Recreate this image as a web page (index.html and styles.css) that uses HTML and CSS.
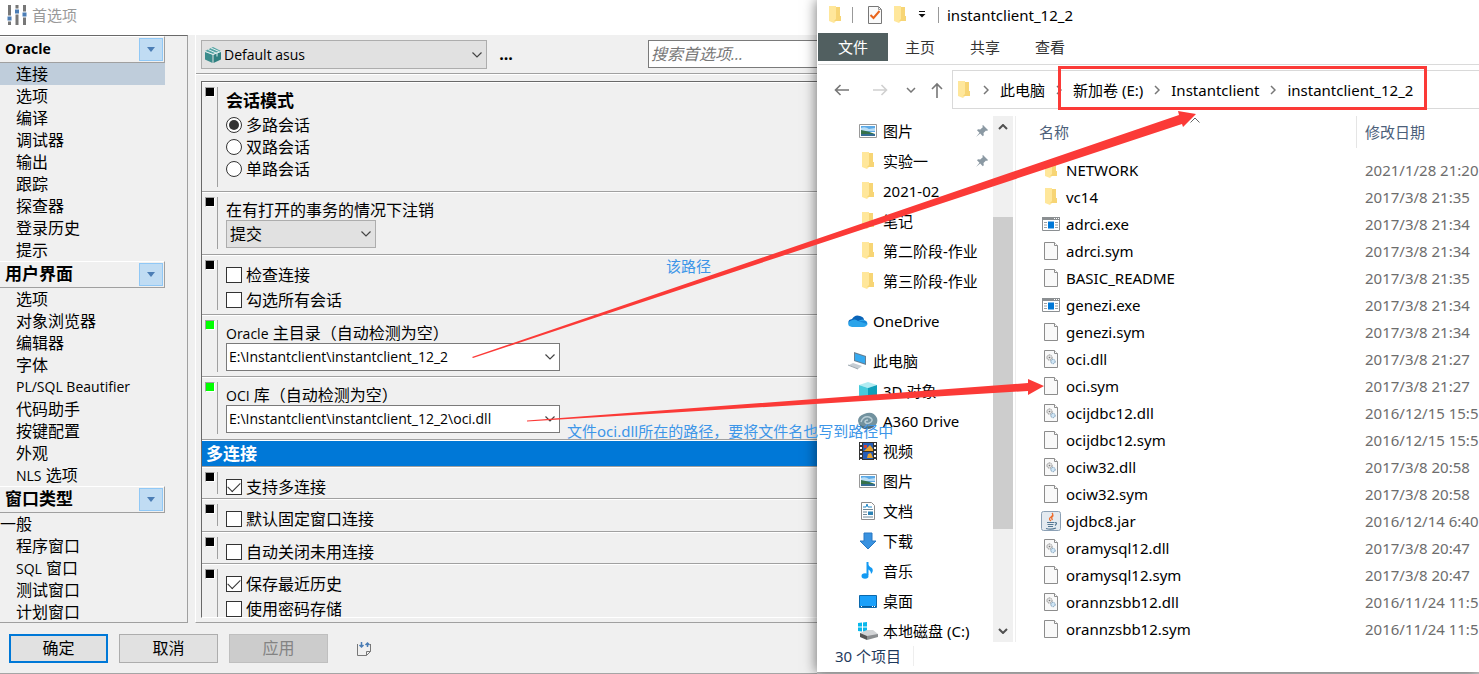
FILE: index.html
```html
<!DOCTYPE html>
<html lang="zh-CN">
<head>
<meta charset="utf-8">
<title>首选项</title>
<link rel="stylesheet" href="styles.css">
</head>
<body>
<svg class="defs" aria-hidden="true">
  <symbol id="chev-down" viewBox="0 0 10 6"><path d="M.5.5 5 5 9.500.5" fill="none" stroke="#444" stroke-width="1.2"/></symbol>
  <symbol id="folder" viewBox="0 0 20 20"><path d="M7 2h7v14H7z" fill="#f5cf68"/><path d="M4 1h7v15l-2 2-5-2z" fill="#ffe79b"/><path d="M11 2h4v9h1v5H9l2-2z" fill="#f7d575"/></symbol>
  <symbol id="file" viewBox="0 0 20 20"><path d="M3.500 1.500h10l3 3v14h-13z" fill="#f9f9f9" stroke="#8c8c8c"/><path d="M13.500 1.500v3h3" fill="#fff" stroke="#8c8c8c"/></symbol>
  <symbol id="dll" viewBox="0 0 20 20"><path d="M3.500 1.500h10l3 3v14h-13z" fill="#f9f9f9" stroke="#8c8c8c"/><path d="M13.500 1.500v3h3" fill="#fff" stroke="#8c8c8c"/><circle cx="8.500" cy="8.500" r="2.600" fill="#e4e4e4" stroke="#888" stroke-dasharray="1.500 .7"/><circle cx="8.500" cy="8.500" r=".8" fill="#777"/><circle cx="12" cy="12.500" r="2.200" fill="#cfe5f5" stroke="#7899b4" stroke-dasharray="1.400 .6"/></symbol>
  <symbol id="exe" viewBox="0 0 20 20"><path d="M1.500 3.500h17v13h-17z" fill="#fff" stroke="#8b8f92"/><path d="M1 3h18v3H1z" fill="#8b8f92"/><path d="M13 4.500h1m1 0h1m1 0h1" stroke="#fff"/><path d="M7 7.500h6v7H7z" fill="#0078d7"/><path d="M3 8.500h3M3 11h3M3 13.500h3M14 8.500h3M14 11h3M14 13.500h3" stroke="#9aa0a4"/></symbol>
  <symbol id="jar" viewBox="0 0 20 20"><rect x=".5" y=".5" width="19" height="19" rx="2" fill="#e4eaf0" stroke="#8ba0b5"/><path d="M11 2q2 2-1 4t0 4M12.500 4.500q-3 2-1 4.500" fill="none" stroke="#ed6b2b" stroke-width="1.300"/><path d="M6 11.500h7.500M6.500 13.500h6M7 15.500h5M5 17.500q5 1.500 10-.5M14 11.500q3 0 0 3" fill="none" stroke="#557894" stroke-width="1.200"/></symbol>
  <symbol id="picture" viewBox="0 0 20 20"><path d="M1.500 3.500h17v13h-17z" fill="#fff" stroke="#999"/><path d="M3 5h14v6H3z" fill="#5ba9e6"/><path d="M3 7q4-2 8 1l6-1v3H3z" fill="#b9ddf6"/><path d="M3 9q7 1 14 4v2H3z" fill="#35714a"/><path d="M3 13h14v2H3z" fill="#356d94"/></symbol>
  <symbol id="pin" viewBox="0 0 14 14"><path d="M8 1l5 5-1 1-1-.5L8.500 9l.3 2.200-1 1L5.200 9.600 1 13l3.500-4.200L2 6.200l1-1 2.200.3L8 3l-.8-1z" fill="#8b99a3"/></symbol>
  <symbol id="onedrive" viewBox="0 0 20 20"><path d="M4 8q3-5 8-3 4 1 4 4l-6 3-8 3Q-2 9 4 8z" fill="#0a64b8"/><path d="M1 15q-2-3 1-5 5-3 8 0 5-3 8 0 3 3 0 5-1 1-3 1H4z" fill="#2ba4ea"/><path d="M10 10l8 0q1 1 1 3z" fill="#1585d6"/></symbol>
  <symbol id="pc" viewBox="0 0 20 20"><path d="M6 1l12 4v9L6 10z" fill="#667f92"/><path d="M7 2.500l10 3.300v6.700L7 9.200z" fill="#35aaf0"/><path d="M1 14l4-2 9 3-4 3z" fill="#c6cdd3"/><path d="M0 14l10 4" stroke="#9aa5ad"/></symbol>
  <symbol id="cube" viewBox="0 0 20 20"><path d="M1 4l9-3 9 3-9 3z" fill="#b0ecf2"/><path d="M1 4l9 3v12l-9-3z" fill="#47cbdc"/><path d="M19 4l-9 3v12l9-3z" fill="#0e9fba"/></symbol>
  <symbol id="a360" viewBox="0 0 20 20"><path d="M0 10q0-5 6-7 9-4 13 4 2 8-7 10l-3-1q-8 1-9-6z" fill="#72929f"/><path d="M3 11q2-6 8-5 5 2 2 5-4 3-6 0 0-2 3-2" fill="none" stroke="#b9ced6" stroke-width="1.500"/><path d="M1 13q6 5 14 1l1 2q-7 4-12 1z" fill="#4c6d7c"/></symbol>
  <symbol id="video" viewBox="0 0 20 20"><path d="M1 1h18v18H1z" fill="#333"/><path d="M5 2h10v8H5zM5 11h10v7H5z" fill="#245db8"/><path d="M6 4h3v3H6z" fill="#cf4334"/><path d="M8 8l4-4 3 4v2H6zM10 13l3-1 2 5h-6z" fill="#e7a22d"/><path d="M3 2v17M17 2v17" stroke="#fff" stroke-width="2" stroke-dasharray="2 2"/></symbol>
  <symbol id="doc" viewBox="0 0 20 20"><path d="M3.500 1.500h10l3 3v14h-13z" fill="#fff" stroke="#8c8c8c"/><path d="M5 6h3l1-3 1 3h4" fill="none" stroke="#278ac8"/><path d="M5 8.500h10M5 11h4M5 13.500h4M5 16h10" stroke="#6d8798"/><path d="M10 10.500h5v3.500h-5z" fill="#2d83b5"/></symbol>
  <symbol id="down" viewBox="0 0 20 20"><path d="M6 2h8v8h4l-8 8-8-8h4z" fill="#3992e0" stroke="#2879c4"/></symbol>
  <symbol id="music" viewBox="0 0 20 20"><path d="M9.500 1v13" stroke="#149af2" stroke-width="2"/><ellipse cx="7" cy="15" rx="3.500" ry="2.800" fill="#149af2"/><path d="M9 1q1 4 5 6 2 3-1 6 0-4-4-5z" fill="#149af2"/></symbol>
  <symbol id="desk" viewBox="0 0 20 20"><path d="M1.500 4.500h17v12h-17z" fill="#1aa0fa" stroke="#0b69ad"/><path d="M2 15.500h16" stroke="#075a9a"/><path d="M3 15.500h1m10 0h1m1 0h1" stroke="#fff"/></symbol>
  <symbol id="drive" viewBox="0 0 20 20"><path d="M0 2l4-.5v4H0zM5 1.400 9 1v4.500H5zM0 6.500h4v4L0 10zM5 6.500h4V11l-4-.4z" fill="#08b8ec"/><path d="M2 12l7-3h6l5 4v2l-11 2-7-3z" fill="#d2d4d6"/><path d="M2 12l7 3v4l-7-3z" fill="#555"/><path d="M9 15l11-2v3L9 19z" fill="#8a8d8f"/></symbol>
  <symbol id="crumb" viewBox="0 0 6 10"><path d="M1 1l4 4-4 4" fill="none" stroke="#777" stroke-width="1.500"/></symbol>
</svg>

<div class="desktop">
  <section class="prefs" aria-label="首选项">
    <header class="prefs-title">
      <svg width="20" height="20" viewBox="0 0 20 20"><path d="M2.500 0v20M10 0v20M17.500 0v20" stroke="#777" stroke-width="3"/><path d="M0 11h5v5H0zM7.500 4h5v5h-5zM15 7h5v5h-5z" fill="#4b7db5" stroke="#fff"/></svg>
      <span>首选项</span>
    </header>

    <div class="prefs-body">
      <nav class="side">
        <h2 class="side-head"><span class="latin">Oracle</span><button type="button" aria-label="折叠 Oracle"><i></i></button></h2>
        <ul>
          <li class="on">连接</li><li>选项</li><li>编译</li><li>调试器</li><li>输出</li><li>跟踪</li><li>探查器</li><li>登录历史</li><li>提示</li>
        </ul>
        <h2 class="side-head"><span>用户界面</span><button type="button" aria-label="折叠 用户界面"><i></i></button></h2>
        <ul>
          <li>选项</li><li>对象浏览器</li><li>编辑器</li><li>字体</li><li class="latin">PL/SQL Beautifier</li><li>代码助手</li><li>按键配置</li><li>外观</li><li><span class="latin">NLS</span> 选项</li>
        </ul>
        <h2 class="side-head"><span>窗口类型</span><button type="button" aria-label="折叠 窗口类型"><i></i></button></h2>
        <ul>
          <li class="outdent">一般</li><li>程序窗口</li><li><span class="latin">SQL</span> 窗口</li><li>测试窗口</li><li>计划窗口</li>
        </ul>
      </nav>

      <div class="main">
        <div class="tools">
          <div class="combo combo-profile">
            <svg class="box-icon" width="16" height="16" viewBox="0 0 16 16"><path d="M0 4l8-4 8 4-8 3z" fill="#53a3a3"/><path d="M0 4.500l7.500 3V16L0 12.500z" fill="#3b8c8c"/><path d="M16 4.500l-7.500 3V16l7.500-3.500z" fill="#2f8080"/><path d="M3 2.500l8 3.500M6 1l8 3.500M12 5.500v4M0 4.500l8 3 8-3" fill="none" stroke="#e1efef"/></svg>
            <select aria-label="配置"><option>Default asus</option></select>
            <svg class="chev" width="10" height="6"><use href="#chev-down"/></svg>
          </div>
          <button type="button" class="more" aria-label="更多">...</button>
          <input class="search" type="text" placeholder="搜索首选项..." aria-label="搜索首选项">
        </div>

        <div class="options">
          <div class="opt">
            <i class="mark"></i><i class="rule"></i>
            <fieldset class="radios">
              <legend>会话模式</legend>
              <label><input type="radio" name="mode" checked>多路会话</label>
              <label><input type="radio" name="mode">双路会话</label>
              <label><input type="radio" name="mode">单路会话</label>
            </fieldset>
          </div>
          <div class="opt roomy">
            <i class="mark"></i><i class="rule"></i>
            <div class="field">
              <label for="logoff">在有打开的事务的情况下注销</label>
              <div class="combo combo-small"><select id="logoff"><option>提交</option></select><svg class="chev" width="10" height="6"><use href="#chev-down"/></svg></div>
            </div>
          </div>
          <div class="opt">
            <i class="mark"></i><i class="rule"></i>
            <div class="checks two">
              <label><input type="checkbox">检查连接</label>
              <label><input type="checkbox">勾选所有会话</label>
            </div>
          </div>
          <div class="opt">
            <i class="mark green"></i><i class="rule"></i>
            <div class="field">
              <label for="home"><span class="latin">Oracle</span> 主目录（自动检测为空）</label>
              <div class="combo combo-path"><select id="home"><option>E:\Instantclient\instantclient_12_2</option></select><svg class="chev" width="10" height="6"><use href="#chev-down"/></svg></div>
            </div>
          </div>
          <div class="opt roomy">
            <i class="mark green"></i><i class="rule"></i>
            <div class="field">
              <label for="lib"><span class="latin">OCI</span> 库（自动检测为空）</label>
              <div class="combo combo-path"><select id="lib"><option>E:\Instantclient\instantclient_12_2\oci.dll</option></select><svg class="chev" width="10" height="6"><use href="#chev-down"/></svg></div>
            </div>
          </div>
          <h3 class="band">多连接</h3>
          <div class="opt"><i class="mark"></i><i class="rule"></i><div class="checks"><label><input type="checkbox" checked>支持多连接</label></div></div>
          <div class="opt roomy"><i class="mark"></i><i class="rule"></i><div class="checks"><label><input type="checkbox">默认固定窗口连接</label></div></div>
          <div class="opt"><i class="mark"></i><i class="rule"></i><div class="checks"><label><input type="checkbox">自动关闭未用连接</label></div></div>
          <div class="opt last"><i class="mark"></i><i class="rule"></i><div class="checks two"><label><input type="checkbox" checked>保存最近历史</label><label><input type="checkbox">使用密码存储</label></div></div>
        </div>
      </div>
    </div>

    <footer class="actions">
      <button type="button" class="btn primary">确定</button>
      <button type="button" class="btn">取消</button>
      <button type="button" class="btn" disabled>应用</button>
      <button type="button" class="sync" aria-label="导入导出"><svg width="16" height="16" viewBox="0 0 16 16"><path d="M1.500 3v11.500h9l4-4V3M10.500 14.500v-4h4" fill="none" stroke="#777"/><path d="M5.500 1v5M3.500 4l2 2 2-2M11.500 6V2M9.500 4l2-2 2 2" fill="none" stroke="#4b7db5" stroke-width="1.500"/></svg></button>
    </footer>
  </section>

  <section class="explorer" aria-label="instantclient_12_2">
    <header class="ex-title">
      <svg width="20" height="20"><use href="#folder"/></svg><i class="bar first"></i>
      <svg class="task" width="16" height="20" viewBox="0 0 16 20"><path d="M1.500 1.500h10l3 3v14h-13z" fill="#fafafa" stroke="#777"/><path d="M11.500 1.500v3h3" fill="none" stroke="#999"/><path d="M3.500 10l3 3 6-7" fill="none" stroke="#e8641b" stroke-width="2"/></svg>
      <svg width="20" height="20"><use href="#folder"/></svg>
      <svg class="qat" width="8" height="7" viewBox="0 0 8 7"><path d="M1 .5h6" stroke="#111"/><path d="M.5 3h7L4 6.500z" fill="#111"/></svg>
      <i class="bar"></i><span>instantclient_12_2</span>
    </header>
    <nav class="tabs">
      <a class="file" href="#">文件</a><a href="#">主页</a><a href="#">共享</a><a href="#">查看</a>
    </nav>
    <div class="address">
      <div class="arrows">
        <svg width="16" height="12" viewBox="0 0 16 12"><path d="M15 6H2M6.500 1l-5 5 5 5" fill="none" stroke="#777" stroke-width="1.600"/></svg>
        <svg width="16" height="12" viewBox="0 0 16 12"><path d="M1 6h13M9.500 1l5 5-5 5" fill="none" stroke="#d0d0d0" stroke-width="1.600"/></svg>
        <svg width="10" height="6" viewBox="0 0 10 6"><path d="M1 1l4 4 4-4" fill="none" stroke="#777" stroke-width="1.500"/></svg>
        <svg width="12" height="16" viewBox="0 0 12 16"><path d="M6 16V2M1 7l5-5 5 5" fill="none" stroke="#777" stroke-width="1.600"/></svg>
      </div>
      <div class="crumbs">
        <svg width="20" height="20"><use href="#folder"/></svg>
        <svg width="6" height="10"><use href="#crumb"/></svg><a href="#">此电脑</a>
        <svg width="6" height="10"><use href="#crumb"/></svg><a href="#">新加卷 (E:)</a>
        <svg width="6" height="10"><use href="#crumb"/></svg><a href="#">Instantclient</a>
        <svg width="6" height="10"><use href="#crumb"/></svg><a href="#">instantclient_12_2</a>
      </div>
    </div>

    <div class="ex-body">
      <ul class="tree">
        <li><svg width="20" height="20"><use href="#picture"/></svg>图片<svg class="pin" width="14" height="14"><use href="#pin"/></svg></li>
        <li><svg width="20" height="20"><use href="#folder"/></svg>实验一<svg class="pin" width="14" height="14"><use href="#pin"/></svg></li>
        <li><svg width="20" height="20"><use href="#folder"/></svg>2021-02</li>
        <li><svg width="20" height="20"><use href="#folder"/></svg>笔记</li>
        <li><svg width="20" height="20"><use href="#folder"/></svg>第二阶段-作业</li>
        <li><svg width="20" height="20"><use href="#folder"/></svg>第三阶段-作业</li>
        <li class="root"><svg width="20" height="20"><use href="#onedrive"/></svg>OneDrive</li>
        <li class="root"><svg width="20" height="20"><use href="#pc"/></svg>此电脑</li>
        <li><svg width="20" height="20"><use href="#cube"/></svg>3D 对象</li>
        <li><svg width="20" height="20"><use href="#a360"/></svg>A360 Drive</li>
        <li><svg width="20" height="20"><use href="#video"/></svg>视频</li>
        <li><svg width="20" height="20"><use href="#picture"/></svg>图片</li>
        <li><svg width="20" height="20"><use href="#doc"/></svg>文档</li>
        <li><svg width="20" height="20"><use href="#down"/></svg>下载</li>
        <li><svg width="20" height="20"><use href="#music"/></svg>音乐</li>
        <li><svg width="20" height="20"><use href="#desk"/></svg>桌面</li>
        <li><svg width="20" height="20"><use href="#drive"/></svg>本地磁盘 (C:)</li>
      </ul>
      <div class="scroll">
        <svg width="10" height="6" viewBox="0 0 10 6"><path d="M1 5l4-4 4 4" fill="none" stroke="#505050" stroke-width="2"/></svg>
        <i class="thumb"></i>
        <svg width="10" height="6" viewBox="0 0 10 6"><path d="M1 1l4 4 4-4" fill="none" stroke="#505050" stroke-width="2"/></svg>
      </div>
      <div class="files">
        <table>
          <thead><tr><th class="name">名称<svg class="sort" width="10" height="6" viewBox="0 0 10 6"><path d="M.5 5.500 5 1l4.500 4.500" fill="none" stroke="#666"/></svg></th><th>修改日期</th></tr></thead>
          <tbody>
            <tr><td><svg width="20" height="20"><use href="#folder"/></svg>NETWORK</td><td>2021/1/28 21:20</td></tr>
            <tr><td><svg width="20" height="20"><use href="#folder"/></svg>vc14</td><td>2017/3/8 21:35</td></tr>
            <tr><td><svg width="20" height="20"><use href="#exe"/></svg>adrci.exe</td><td>2017/3/8 21:34</td></tr>
            <tr><td><svg width="20" height="20"><use href="#file"/></svg>adrci.sym</td><td>2017/3/8 21:34</td></tr>
            <tr><td><svg width="20" height="20"><use href="#file"/></svg>BASIC_README</td><td>2017/3/8 21:35</td></tr>
            <tr><td><svg width="20" height="20"><use href="#exe"/></svg>genezi.exe</td><td>2017/3/8 21:34</td></tr>
            <tr><td><svg width="20" height="20"><use href="#file"/></svg>genezi.sym</td><td>2017/3/8 21:34</td></tr>
            <tr><td><svg width="20" height="20"><use href="#dll"/></svg>oci.dll</td><td>2017/3/8 21:27</td></tr>
            <tr><td><svg width="20" height="20"><use href="#file"/></svg>oci.sym</td><td>2017/3/8 21:27</td></tr>
            <tr><td><svg width="20" height="20"><use href="#dll"/></svg>ocijdbc12.dll</td><td>2016/12/15 15:5</td></tr>
            <tr><td><svg width="20" height="20"><use href="#file"/></svg>ocijdbc12.sym</td><td>2016/12/15 15:5</td></tr>
            <tr><td><svg width="20" height="20"><use href="#dll"/></svg>ociw32.dll</td><td>2017/3/8 20:58</td></tr>
            <tr><td><svg width="20" height="20"><use href="#file"/></svg>ociw32.sym</td><td>2017/3/8 20:58</td></tr>
            <tr><td><svg width="20" height="20"><use href="#jar"/></svg>ojdbc8.jar</td><td>2016/12/14 6:40</td></tr>
            <tr><td><svg width="20" height="20"><use href="#dll"/></svg>oramysql12.dll</td><td>2017/3/8 20:47</td></tr>
            <tr><td><svg width="20" height="20"><use href="#file"/></svg>oramysql12.sym</td><td>2017/3/8 20:47</td></tr>
            <tr><td><svg width="20" height="20"><use href="#dll"/></svg>orannzsbb12.dll</td><td>2016/11/24 11:5</td></tr>
            <tr><td><svg width="20" height="20"><use href="#file"/></svg>orannzsbb12.sym</td><td>2016/11/24 11:5</td></tr>
          </tbody>
        </table>
      </div>
    </div>
    <footer class="status"><span>30 个项目</span></footer>
  </section>

  <svg class="ink" aria-hidden="true">
    <rect x="1059.500" y="67.500" width="366" height="41" fill="none" stroke="#fb3a37" stroke-width="3"/>
    <path d="M472 357 1179 115 1178 111 1196 114 1183 127 1182 124 473 358z" fill="#fb3a37"/>
    <path d="M527 420.500 1028 383V379L1044 386 1028 395V391L527 421.500z" fill="#fb3a37"/>
  </svg>
  <p class="note note-path">该路径</p>
  <p class="note note-file">文件oci.dll所在的路径，要将文件名也写到路径中</p>
</div>
</body>
</html>
```
FILE: styles.css
```css
* { box-sizing: border-box; }
body, h2, h3, ul, p, fieldset, legend { margin: 0; padding: 0; }
ul { list-style: none; }
button, input, select { font: inherit; color: inherit; border-radius: 0; margin: 0; }
svg { display: block; flex: none; }
i { display: block; flex: none; }
a { color: inherit; text-decoration: none; }
.defs { position: absolute; width: 0; height: 0; }

body {
  font: 15px/20px "Noto Sans", "Noto Sans CJK SC", sans-serif;
  color: #000;
  background: #c8c8c8;
}
.desktop {
  position: relative;
  display: grid;
  grid-template-columns: minmax(0, 817fr) minmax(0, 662fr);
  height: 100vh;
  overflow: hidden;
}

/* preferences window */
.prefs {
  display: flex;
  flex-direction: column;
  min-height: 0;
  background: #f0f0f0;
  border-bottom: 1px solid #a5a5a5;
  font-family: "Open Sans", "Noto Sans CJK SC", sans-serif;
  font-size: 16px;
}
.latin { font-size: 14px; }
.prefs-title {
  display: flex;
  align-items: center;
  gap: 5px;
  height: 35px;
  padding: 0 7px 5px;
  background: #fff;
  color: #999;
  font-size: 15px;
}
.prefs-body { display: flex; flex: 1; min-height: 0; }
.side {
  flex: none;
  width: 188px;
  padding-right: 22px;
  overflow: hidden;
  border: solid #a0a0a0;
  border-width: 1px 1px 1px 0;
  border-top-color: #696969;
}
.side-head {
  display: flex;
  align-items: center;
  justify-content: space-between;
  height: 27px;
  padding: 0 1px 1px 5px;
  border: 1px solid #fff;
  border-width: 1px 1px 1px 0;
  border-right-color: #a0a0a0;
  border-bottom-color: #a0a0a0;
  font-size: 17px;
  line-height: 24px;
}
.side-head button {
  display: grid;
  place-items: center;
  width: 24px;
  height: 23px;
  padding: 0;
  background: #c0dcf3;
  border: 1px solid #90c8f6;
}
.side-head i {
  border: 4px solid transparent;
  border-top: 5px solid #4b7db5;
  border-bottom: 0;
}
.side li { height: 22px; padding-left: 16px; line-height: 22px; white-space: nowrap; }
.side li.on { background: #bfcddb; }
.side li.outdent { padding-left: 0; }

.main {
  display: flex;
  flex-direction: column;
  flex: 1;
  min-width: 0;
  margin-left: 7px;
  padding-bottom: 4px;
  border-left: 1px solid #fff;
  border-bottom: 1px solid #a0a0a0;
}
.tools {
  display: flex;
  height: 39px;
  padding: 5px 0 0 5px;
  border-bottom: 1px solid #a0a0a0;
  box-shadow: 0 1px #fff;
}
.combo { display: grid; }
.combo > * { grid-area: 1 / 1; }
.combo select {
  width: 100%;
  height: 28px;
  padding: 0 3px;
  appearance: none;
  background: #e1e1e1;
  border: 1px solid #adadad;
}
.combo .chev { align-self: center; justify-self: end; margin-right: 5px; pointer-events: none; }
.combo-profile { width: 286px; height: 29px; font-size: 14px; }
.combo-profile select { height: 29px; padding-left: 22px; }
.box-icon { z-index: 1; align-self: center; margin-left: 4px; }
.combo-small { width: 150px; }
.combo-path { width: 334px; font-size: 14px; }
.combo-path select { background: #fff; border-color: #7a7a7a; padding: 0 2px 1px; }
.more { width: 38px; padding: 0 0 5px; border: 0; background: none; font-weight: bold; }
.search {
  flex: 1;
  min-width: 0;
  height: 28px;
  margin-left: 123px;
  padding: 0 2px 1px;
  border: 1px solid #7a7a7a;
  border-right: 0;
  background: #fff;
}
.search::placeholder { color: #777; font-style: italic; opacity: 1; }

.options {
  flex: 1;
  min-height: 0;
  margin: 7px 0 0 5px;
  overflow: hidden;
  border-top: 1px solid #696969;
  border-left: 1px solid #696969;
  border-bottom: 1px solid #fff;
}
.opt {
  display: flex;
  padding: 4px 0 0 3px;
  border-top: 1px solid #fff;
  border-bottom: 1px solid #a0a0a0;
}
.opt.roomy { padding-bottom: 1px; }
.opt.last { border-bottom: 0; }
.mark { width: 10px; height: 10px; background: #000; border: 1px solid #a0a0a0; border-right-color: #fff; border-bottom-color: #fff; }
.mark.green { background: #0f0; }
.rule { width: 1px; margin: 0 8px 4px 2px; background: #a0a0a0; }
.radios { padding: 2px 0 11px; border: 0; }
.radios legend { padding-top: 3px; font-size: 17px; font-weight: bold; line-height: 22px; }
.radios label, .checks label { display: flex; align-items: center; gap: 4px; line-height: 22px; height: 22px; }
.field { padding: 3px 0 5px; }
.field label { display: block; height: 20px; line-height: 20px; }
.checks { padding-top: 4px; }
.checks.two { display: grid; gap: 3px; padding-bottom: 3px; }
input[type="radio"], input[type="checkbox"] {
  appearance: none;
  display: grid;
  place-items: center;
  width: 16px;
  height: 16px;
  background: #fff;
  border: 1px solid #333;
}
input[type="radio"] { border-radius: 50%; }
input[type="radio"]:checked::after { content: ""; width: 10px; height: 10px; border-radius: 50%; background: #333; }
input[type="checkbox"]:checked::after {
  content: "";
  width: 11px;
  height: 6px;
  margin-bottom: 3px;
  border: solid #333;
  border-width: 0 0 1px 1px;
  transform: rotate(-45deg);
}
.band {
  height: 27px;
  padding-left: 4px;
  background: #0078d7;
  border-top: 1px solid #fff;
  border-bottom: 1px solid #a0a0a0;
  color: #fff;
  font-size: 17px;
  line-height: 25px;
}

.actions { display: flex; gap: 11px; padding: 11px 9px 10px; }
.btn { width: 99px; height: 29px; padding: 0 0 1px; background: #e1e1e1; border: 1px solid #adadad; }
.btn.primary { border: 2px solid #0078d7; }
.btn:disabled { background: #ccc; border-color: #bfbfbf; color: #838383; }
.sync { margin-left: 17px; padding: 0; border: 0; background: none; }

/* file explorer window */
.explorer {
  display: flex;
  flex-direction: column;
  min-height: 0;
  margin-bottom: 2px;
  background: #fff;
  border-left: 1px solid #fff;
  box-shadow: -1px 0 12px rgba(0, 0, 0, .5);
}
.ex-title { display: flex; align-items: center; height: 33px; padding: 0 0 4px 7px; }
.bar { width: 1px; height: 16px; margin-right: 8px; background: #999; }
.bar.first { margin: 0 14px 0 7px; }
.task { margin-right: 7px; }
.qat { margin: 0 12px 0 8px; }
.tabs { display: flex; height: 32px; border-bottom: 1px solid #dadada; color: #333; }
.tabs a { height: 28px; padding: 0 17px 0 18px; line-height: 29px; }
.tabs .file { padding: 0 20px; margin-right: -1px; background: #515f60; color: #fff; }
.address { display: flex; height: 51px; padding: 5px 0 7px; }
.arrows { display: flex; flex: none; align-items: center; gap: 22px; width: 134px; padding-left: 16px; }
.arrows svg:nth-child(4) { margin-left: -7px; }
.arrows svg:nth-child(3) { margin-left: -4px; }
.crumbs {
  display: flex;
  flex: 1;
  align-items: center;
  gap: 11px;
  min-width: 0;
  padding-left: 1px;
  overflow: hidden;
  border: 1px solid #d9d9d9;
  border-right: 0;
  white-space: nowrap;
}
.crumbs svg:first-child { margin-right: -2px; }

.ex-body { display: flex; flex: 1; min-height: 0; overflow: hidden; }
.tree { flex: none; width: 175px; }
.tree li { display: flex; align-items: center; gap: 5px; height: 30px; padding: 0 4px 0 40px; white-space: nowrap; }
.tree .root { padding-left: 30px; margin-top: 10px; }
.tree .pin { margin-left: auto; }
.scroll {
  display: flex;
  flex-direction: column;
  flex: none;
  align-items: center;
  width: 20px;
  padding: 8px 0;
  background: #f0f0f0;
}
.thumb { flex: 312; width: 20px; margin: 87px 0 99px; background: #cdcdcd; }
.files { flex: 1; min-width: 0; margin-left: 2px; overflow: hidden; border-left: 1px solid #eee; }
table { width: 100%; border-collapse: collapse; table-layout: fixed; }
th, td { height: 27px; padding: 0 0 0 8px; text-align: left; white-space: nowrap; overflow: hidden; }
td:first-child { padding-left: 25px; }
td svg { display: inline-block; margin-right: 5px; vertical-align: -4px; }
td:last-child { color: #6d6d6d; }
thead tr { height: 40px; }
th { padding-bottom: 8px; color: #4c607a; font-weight: normal; }
th.name { position: relative; width: 341px; padding-left: 23px; background: linear-gradient(#e5e5e5, #e5e5e5) right top / 1px 32px no-repeat; }
.sort { position: absolute; top: 1px; left: 174px; }
.status { height: 30px; padding: 4px 0 0 17px; color: #1e395b; }
.status span { display: inline-block; padding-right: 12px; line-height: 20px; border-right: 1px solid #eee; }

/* annotations drawn over both windows */
.ink { position: absolute; inset: 0; width: 100%; height: 100%; pointer-events: none; }
.note { position: absolute; color: #3d96e8; white-space: nowrap; }
.note-path { left: 666px; top: 256px; }
.note-file { left: 567px; top: 421px; }
```
